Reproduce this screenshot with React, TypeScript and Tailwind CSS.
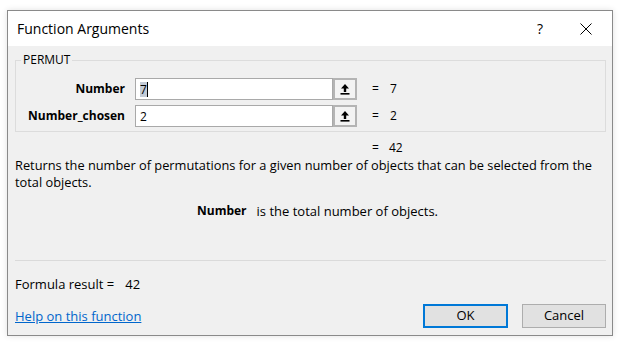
import React from "react";

const font = { fontFamily: '"Open Sans", "Noto Sans", sans-serif' };

function RefIcon() {
  return (
    <svg width="10" height="12" viewBox="0 0 10 12">
      <path d="M5 1 L9 5.5 L6.2 5.5 L6.2 9 L3.8 9 L3.8 5.5 L1 5.5 Z" fill="#000" />
      <rect x="0.5" y="10" width="9" height="1.6" fill="#000" />
    </svg>
  );
}

function ArgRow({ label, value, result, active }: { label: string; value: string; result: string; active?: boolean }) {
  return (
    <div className="flex items-center h-[22px]">
      <div className="w-[109px] text-right font-bold text-[12px] text-black leading-none">{label}</div>
      <div className="ml-[10px] flex h-[22px]">
        <div className="w-[198px] h-[22px] bg-white border border-[#a9a9a9] flex items-center pl-[4px] text-[12px] text-black">
          {active ? (
            <>
              <span className="bg-[#c3cbd6] leading-[15px]">{value}</span>
              <span className="w-px h-[15px] bg-black" />
            </>
          ) : (
            <span className="leading-[15px]">{value}</span>
          )}
        </div>
        <div className="w-[24px] h-[22px] border-2 border-[#b4b4b4] bg-[#f3f3f3] flex items-center justify-center">
          <RefIcon />
        </div>
      </div>
      <div className="ml-[15px] text-[12px] text-black flex">
        <span className="w-[18px]">=</span>
        <span>{result}</span>
      </div>
    </div>
  );
}

export default function App() {
  return (
    <div className="w-[622px] h-[346px] bg-white pl-[7px] pt-[10px]" style={font}>
      <div className="w-[606px] h-[326px] border border-[#8a8a8a] flex flex-col shadow-[0_0_6px_rgba(0,0,0,0.12)]">
        {/* Title bar */}
        <div className="h-[35px] bg-white flex items-center shrink-0">
          <div className="pl-[9px] text-[14px] text-black flex-1">Function Arguments</div>
          <div className="w-[20px] text-center text-[14px] text-black mr-[30px]">?</div>
          <div className="w-[12px] h-[12px] mr-[20px]">
            <svg width="12" height="12" viewBox="0 0 12 12">
              <path d="M0.5 0.5 L11.5 11.5 M11.5 0.5 L0.5 11.5" stroke="#000" strokeWidth="1" />
            </svg>
          </div>
        </div>
        {/* Body */}
        <div className="flex-1 bg-[#f0f0f0] flex flex-col pl-[7px] pr-[6px]">
          <fieldset className="mt-[6px] border border-[#dcdcdc] pb-[4px] pt-[10px]">
            <legend className="ml-[5px] px-[2px] text-[12px] leading-[16px] text-black">PERMUT</legend>
            <div className="flex flex-col gap-[5px]">
              <ArgRow label="Number" value="7" result="7" active />
              <ArgRow label="Number_chosen" value="2" result="2" />
            </div>
          </fieldset>
          <div className="mt-[8px] h-[16px] flex text-[12px] leading-[16px] text-black">
            <span className="ml-[357px] w-[17px]">=</span>
            <span>42</span>
          </div>
          <div className="mt-[1px] text-[12.8px] leading-[17px] text-black whitespace-nowrap">
            Returns the number of permutations for a given number of objects that can be selected from the
            <br />
            total objects.
          </div>
          <div className="mt-[12px] text-[13px] leading-[16px] text-black flex">
            <span className="ml-[182px] font-bold text-[12px]">Number</span>
            <span className="ml-[10px]">is the total number of objects.</span>
          </div>
          <div className="flex-1" />
          <div className="h-px bg-[#dadada]" />
          <div className="mt-[15px] h-[16px] text-[13px] leading-[16px] text-black flex">
            <span>Formula result =</span>
            <span className="ml-[11px]">42</span>
          </div>
          <div className="mt-[12px] flex items-center mb-[7px]">
            <a className="text-[13px] text-[#0066cc] underline flex-1 leading-[16px]">Help on this function</a>
            <div className="w-[85px] h-[24px] border-2 border-[#0078d7] bg-[#e1e1e1] flex items-center justify-center text-[13px] text-black">OK</div>
            <div className="ml-[14px] w-[84px] h-[24px] border border-[#adadad] bg-[#e1e1e1] flex items-center justify-center text-[13px] text-black">Cancel</div>
          </div>
        </div>
      </div>
    </div>
  );
}
